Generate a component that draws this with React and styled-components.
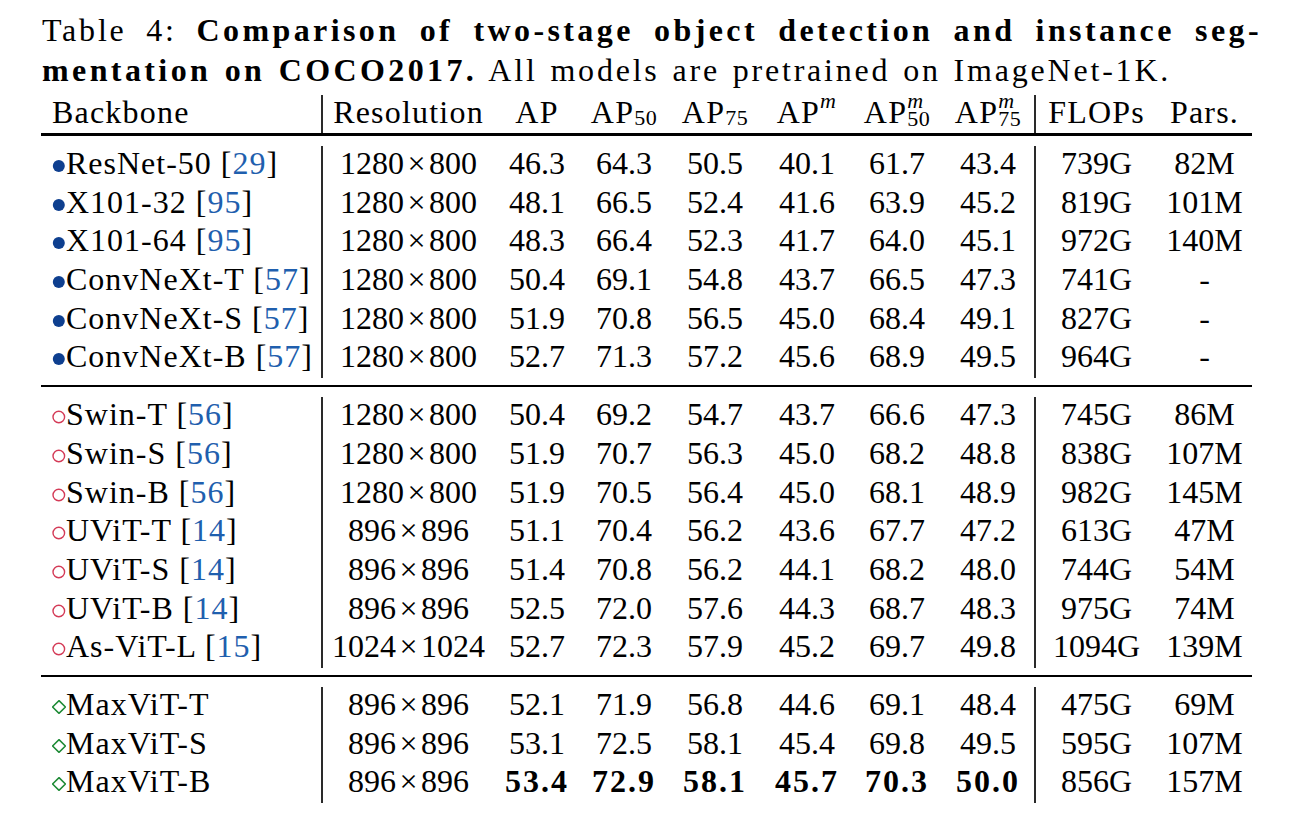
import React from "react";
import styled, { createGlobalStyle } from "styled-components";

const GlobalStyle = createGlobalStyle`
  html, body {
    margin: 0;
    padding: 0;
    background: #fff;
  }
  body {
    font-family: "Liberation Serif", "Times New Roman", serif;
    color: #000;
  }
`;

const Page = styled.div`
  width: 1306px;
  height: 838px;
  box-sizing: border-box;
  padding: 10px 0 0 41px;
  font-size: 32px;
`;

const Caption = styled.div`
  width: 1220px;
  margin-left: 1px;
  line-height: 40px;
  letter-spacing: 2.8px;
  word-spacing: 2px;
  b {
    letter-spacing: 3.4px;
  }
`;

const CaptionLine = styled.div`
  text-align: ${(p) => (p.$justify ? "justify" : "left")};
  text-align-last: ${(p) => (p.$justify ? "justify" : "left")};
`;

const Table = styled.div`
  margin-top: 5px;
  width: 1211px;
`;

const Row = styled.div`
  display: grid;
  grid-template-columns: 282px 171px 86px 88px 94px 90px 90px 94px 121px 95px;
  height: ${(p) => (p.$header ? "38px" : "38.7px")};
  line-height: 34px;
  letter-spacing: ${(p) => (p.$header ? "1.2px" : "0")};
`;

const Cell = styled.div`
  text-align: ${(p) => (p.$left ? "left" : "center")};
  padding-left: ${(p) => (p.$left ? "11px" : "0")};
  border-right: ${(p) => (p.$sep ? "2px solid #2a2a2a" : "none")};
  font-weight: ${(p) => (p.$bold ? 700 : 400)};
  white-space: nowrap;
  ${(p) => p.$bold && "letter-spacing: 2px;"}
`;

const Name = styled.span`
  letter-spacing: 1px;
`;

const Rule = styled.div`
  height: ${(p) => (p.$thick ? "3px" : "2px")};
  background: #000;
  margin: ${(p) => (p.$thick ? "0 0 10px" : "7px 0 10px")};
`;

const Sub = styled.span`
  font-size: 22px;
  line-height: 0;
  letter-spacing: 0.5px;
  vertical-align: -2px;
`;

const Sup = styled.span`
  font-size: 22px;
  font-style: italic;
  line-height: 0;
  vertical-align: 15px;
`;

const Stack = styled.span`
  display: inline-block;
  font-size: 22px;
  line-height: 18px;
  letter-spacing: 0.5px;
  vertical-align: -2.5px;
  margin-top: -6px;
  text-align: left;
  i,
  span {
    display: block;
  }
`;

const Times = styled.span`
  margin: 0 3.5px;
`;

const Cite = styled.span`
  color: #1f5fae;
`;

const MarkSvg = styled.svg`
  width: 14px;
  height: 14px;
  vertical-align: 1px;
`;

function Marker({ kind }) {
  if (kind === "bullet") {
    return (
      <MarkSvg viewBox="0 0 14 14">
        <circle cx="6.8" cy="7" r="6" fill="#0e3f8f" />
      </MarkSvg>
    );
  }
  if (kind === "circle") {
    return (
      <MarkSvg viewBox="0 0 14 14">
        <circle cx="6.8" cy="7" r="5.8" fill="none" stroke="#d43b57" strokeWidth="1.4" />
      </MarkSvg>
    );
  }
  return (
    <MarkSvg viewBox="0 0 14 14">
      <path d="M7 0.6 L13.4 7 L7 13.4 L0.6 7 Z" fill="none" stroke="#1d8a35" strokeWidth="1.5" />
    </MarkSvg>
  );
}

const groups = [
  {
    kind: "bullet",
    rows: [
      ["ResNet-50", "29", "1280", "800", ["46.3", "64.3", "50.5", "40.1", "61.7", "43.4"], "739G", "82M"],
      ["X101-32", "95", "1280", "800", ["48.1", "66.5", "52.4", "41.6", "63.9", "45.2"], "819G", "101M"],
      ["X101-64", "95", "1280", "800", ["48.3", "66.4", "52.3", "41.7", "64.0", "45.1"], "972G", "140M"],
      ["ConvNeXt-T", "57", "1280", "800", ["50.4", "69.1", "54.8", "43.7", "66.5", "47.3"], "741G", "-"],
      ["ConvNeXt-S", "57", "1280", "800", ["51.9", "70.8", "56.5", "45.0", "68.4", "49.1"], "827G", "-"],
      ["ConvNeXt-B", "57", "1280", "800", ["52.7", "71.3", "57.2", "45.6", "68.9", "49.5"], "964G", "-"],
    ],
  },
  {
    kind: "circle",
    rows: [
      ["Swin-T", "56", "1280", "800", ["50.4", "69.2", "54.7", "43.7", "66.6", "47.3"], "745G", "86M"],
      ["Swin-S", "56", "1280", "800", ["51.9", "70.7", "56.3", "45.0", "68.2", "48.8"], "838G", "107M"],
      ["Swin-B", "56", "1280", "800", ["51.9", "70.5", "56.4", "45.0", "68.1", "48.9"], "982G", "145M"],
      ["UViT-T", "14", "896", "896", ["51.1", "70.4", "56.2", "43.6", "67.7", "47.2"], "613G", "47M"],
      ["UViT-S", "14", "896", "896", ["51.4", "70.8", "56.2", "44.1", "68.2", "48.0"], "744G", "54M"],
      ["UViT-B", "14", "896", "896", ["52.5", "72.0", "57.6", "44.3", "68.7", "48.3"], "975G", "74M"],
      ["As-ViT-L", "15", "1024", "1024", ["52.7", "72.3", "57.9", "45.2", "69.7", "49.8"], "1094G", "139M"],
    ],
  },
  {
    kind: "diamond",
    rows: [
      ["MaxViT-T", null, "896", "896", ["52.1", "71.9", "56.8", "44.6", "69.1", "48.4"], "475G", "69M"],
      ["MaxViT-S", null, "896", "896", ["53.1", "72.5", "58.1", "45.4", "69.8", "49.5"], "595G", "107M"],
      ["MaxViT-B", null, "896", "896", ["53.4", "72.9", "58.1", "45.7", "70.3", "50.0"], "856G", "157M", true],
    ],
  },
];

function DataRow({ kind, row }) {
  const [name, cite, w, h, scores, flops, pars, best] = row;
  return (
    <Row>
      <Cell $left $sep>
        <Marker kind={kind} />
        <Name>
          {name}
          {cite && (
            <>
              {" "}[<Cite>{cite}</Cite>]
            </>
          )}
        </Name>
      </Cell>
      <Cell>
        {w}
        <Times>×</Times>
        {h}
      </Cell>
      {scores.map((s, i) => (
        <Cell key={i} $bold={best} $sep={i === 5}>
          {s}
        </Cell>
      ))}
      <Cell>{flops}</Cell>
      <Cell>{pars}</Cell>
    </Row>
  );
}

export default function App() {
  return (
    <Page>
      <GlobalStyle />
      <Caption>
        <CaptionLine $justify>
          Table 4: <b>Comparison of two-stage object detection and instance seg-</b>
        </CaptionLine>
        <CaptionLine>
          <b>mentation on COCO2017.</b> All models are pretrained on ImageNet-1K.
        </CaptionLine>
      </Caption>
      <Table>
        <Row $header>
          <Cell $left $sep>Backbone</Cell>
          <Cell>Resolution</Cell>
          <Cell>AP</Cell>
          <Cell>
            AP<Sub>50</Sub>
          </Cell>
          <Cell>
            AP<Sub>75</Sub>
          </Cell>
          <Cell>
            AP<Sup>m</Sup>
          </Cell>
          <Cell>
            AP
            <Stack>
              <i>m</i>
              <span>50</span>
            </Stack>
          </Cell>
          <Cell $sep>
            AP
            <Stack>
              <i>m</i>
              <span>75</span>
            </Stack>
          </Cell>
          <Cell>FLOPs</Cell>
          <Cell>Pars.</Cell>
        </Row>
        <Rule $thick />
        {groups.map((g, gi) => (
          <React.Fragment key={gi}>
            {gi > 0 && <Rule />}
            <div>
              {g.rows.map((r, ri) => (
                <DataRow key={ri} kind={g.kind} row={r} />
              ))}
            </div>
          </React.Fragment>
        ))}
      </Table>
    </Page>
  );
}
